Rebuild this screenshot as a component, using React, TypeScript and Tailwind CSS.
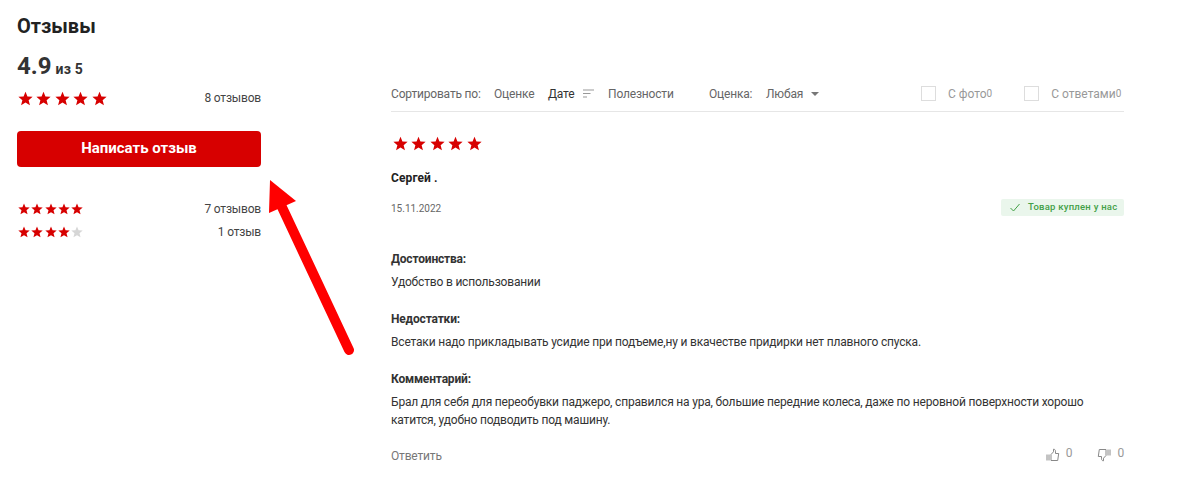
import React from 'react';

const Star = ({ size, color = '#d70000' }: { size: number; color?: string }) => (
  <svg width={size} height={size} viewBox="0 0 24 24" className="block shrink-0">
    <polygon fill={color} points="12,1 15.1,8.6 23.4,9.2 17,14.6 19.1,22.7 12,18.3 4.9,22.7 7,14.6 0.6,9.2 8.9,8.6" />
  </svg>
);

const Stars = ({ size, gap, grey = 0 }: { size: number; gap: string; grey?: number }) => (
  <div className={`flex ${gap}`}>
    {[0, 1, 2, 3, 4].map((i) => (
      <Star key={i} size={size} color={i >= 5 - grey ? '#d6d6d6' : '#d70000'} />
    ))}
  </div>
);

const SummaryRow = ({ grey, label }: { grey?: number; label: string }) => (
  <div className="flex h-[23px] items-center justify-between">
    <div className="pl-[1px]">
      <Stars size={12} gap="gap-[1.3px]" grey={grey} />
    </div>
    <span className="text-[12px] tracking-[-0.18px] text-[#444]">{label}</span>
  </div>
);

const Section = ({ title, children }: { title: string; children: React.ReactNode }) => (
  <div className="mb-[18px]">
    <div className="mb-[6px] h-[18px] pt-[1px] text-[12px] leading-[18px] font-bold tracking-[-0.18px] text-[#333]">{title}</div>
    <p className="text-[12px] leading-[18px] tracking-[-0.18px] text-[#333]">{children}</p>
  </div>
);

const Check = ({ label, count, className }: { label: string; count: string; className?: string }) => (
  <div className={`flex items-center ${className ?? ''}`}>
    <span className="mr-[12px] h-[15px] w-[15px] border border-[#ddd]" />
    <span className="text-[12px] tracking-normal text-[#999]">{label}</span>
    <span className="text-[10px] tracking-normal text-[#999]">{count}</span>
  </div>
);

const Thumb = ({ down }: { down?: boolean }) => (
  <svg width="14" height="14" viewBox="0 0 14 14" fill="none" stroke="#888" strokeWidth="1" className={down ? 'rotate-180' : ''}>
    <path d="M1 6.5v6M3 6.5v6" />
    <path d="M5 6.5l2.5-2.7V1.2c1.3 0 2 .9 2 2V5.5h3.2l-1 7H5z" />
  </svg>
);

export default function App() {
  return (
    <div className="relative flex h-[482px] w-[1181px] overflow-hidden bg-white font-['Roboto',sans-serif] text-[#333]">
      <aside className="ml-[17px] w-[244px] shrink-0">
        <h2 className="mt-[14px] h-[24px] text-[20px] leading-[24px] font-bold text-[#222]">Отзывы</h2>
        <div className="mt-[14px] flex h-[28px] items-baseline font-bold text-[#333]">
          <span className="text-[24px] leading-[28px]">4.9</span>
          <span className="ml-[4px] text-[14px] tracking-[0.2px]">из 5</span>
        </div>
        <div className="mt-[10px] flex h-[16px] items-center justify-between">
          <div className="pl-[1px]">
            <Stars size={15} gap="gap-[3.4px]" />
          </div>
          <span className="text-[12px] tracking-[-0.18px] text-[#444]">8 отзывов</span>
        </div>
        <button className="mt-[25px] flex h-[36px] w-full items-center justify-center rounded-[4px] bg-[#d70000] pb-[1px] text-[15px] font-bold text-white">
          Написать отзыв
        </button>
        <div className="mt-[30px]">
          <SummaryRow label="7 отзывов" />
          <SummaryRow grey={1} label="1 отзыв" />
        </div>
      </aside>

      <main className="ml-[130px] w-[733px] shrink-0">
        <div className="mt-[77px] flex h-[35px] items-center border-b border-[#e6e6e6] pb-[1px] text-[12px] tracking-[-0.18px] whitespace-nowrap text-[#666]">
          <span className="w-[89px]">Сортировать по:</span>
          <span className="ml-[14px] w-[40px]">Оценке</span>
          <span className="ml-[14px] w-[26px] text-[#333]">Дате</span>
          <svg width="11" height="9" viewBox="0 0 11 9" stroke="#999" className="ml-[9px]">
            <path d="M0 1h11M0 4.500h7.500M0 8h4" />
          </svg>
          <span className="ml-[14px] w-[66px]">Полезности</span>
          <span className="ml-[35px] w-[43px]">Оценка:</span>
          <span className="ml-[14px] w-[36px]">Любая</span>
          <span className="ml-[9px] h-0 w-0 border-x-[4px] border-t-[4px] border-x-transparent border-t-[#777]" />
          <Check label="С фото" count="0" className="ml-[102px]" />
          <Check label="С ответами" count="0" className="ml-[32px]" />
        </div>

        <div className="mt-[24px] pl-[2px]">
          <Stars size={15} gap="gap-[3.4px]" />
        </div>
        <div className="mt-[18px] h-[18px] text-[12px] leading-[18px] font-bold tracking-[0.1px] text-[#222]">Сергей .</div>
        <div className="mt-[12px] flex h-[18px] items-center justify-between">
          <span className="text-[10px] text-[#666]">15.11.2022</span>
          <span className="mb-[1px] flex h-[17px] w-[123px] items-center rounded-[2px] bg-[#eaf6ec] pl-[9px] text-[9.500px] font-medium tracking-[0.25px] text-[#43a047]">
            <svg width="10" height="9" viewBox="0 0 10 9" fill="none" stroke="#43a047" className="mr-[8px]">
              <path d="M.5 5l3 3L9.500 1" />
            </svg>
            Товар куплен у нас
          </span>
        </div>

        <div className="mt-[32px]">
          <Section title="Достоинства:">Удобство в использовании</Section>
          <Section title="Недостатки:">Всетаки надо прикладывать усидие при подъеме,ну и вкачестве придирки нет плавного спуска.</Section>
          <Section title="Комментарий:">
            Брал для себя для переобувки паджеро, справился на ура, большие передние колеса, даже по неровной поверхности хорошо катится, удобно подводить под машину.
          </Section>
        </div>

        <div className="flex items-start justify-between text-[12px] leading-[18px] tracking-[-0.18px] text-[#777]">
          <span>Ответить</span>
          <div className="flex items-start">
            <span className="mt-[1px]">
              <Thumb />
            </span>
            <span className="ml-[6px] leading-[12px] text-[#999]">0</span>
            <span className="mt-[1px] ml-[25px]">
              <Thumb down />
            </span>
            <span className="ml-[6px] leading-[12px] text-[#999]">0</span>
          </div>
        </div>
      </main>

      {/* annotation arrow drawn over the page */}
      <svg className="absolute top-0 left-0 h-[482px] w-[1181px]" viewBox="0 0 1181 482" fill="none">
        <path d="M349 350L281 205" stroke="#ff0000" strokeWidth="10" strokeLinecap="round" />
        <polygon points="270,180 296,201 269,213" fill="#ff0000" />
      </svg>
    </div>
  );
}
